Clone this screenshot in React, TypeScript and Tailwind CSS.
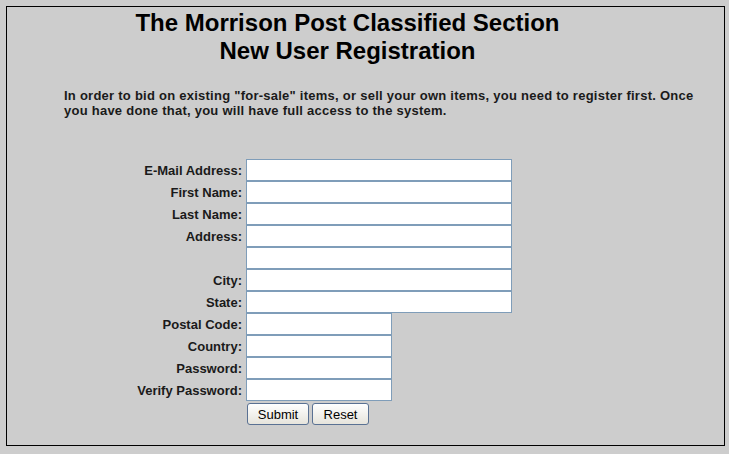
import React from "react";

const wide = "w-[266px]";
const short = "w-[146px]";

const rows: { label: string; w: string }[] = [
  { label: "E-Mail Address:", w: wide },
  { label: "First Name:", w: wide },
  { label: "Last Name:", w: wide },
  { label: "Address:", w: wide },
  { label: "", w: wide },
  { label: "City:", w: wide },
  { label: "State:", w: wide },
  { label: "Postal Code:", w: short },
  { label: "Country:", w: short },
  { label: "Password:", w: short },
  { label: "Verify Password:", w: short },
];

export default function App() {
  return (
    <div
      className="w-[729px] h-[454px] bg-[#cdcdcd] pt-[6px] pl-[6px] overflow-hidden text-black"
      style={{ fontFamily: '"Liberation Sans", Arial, sans-serif' }}
    >
      <div className="w-[719px] h-[440px] border border-black">
        <div className="w-[681px] text-center text-[24px] font-bold leading-[28px] pt-[2px]">
          <div>The Morrison Post Classified Section</div>
          <div>New User Registration</div>
        </div>
        <p className="mt-[23px] pl-[57px] pr-[20px] text-[13px] leading-[15px] font-bold tracking-[0.25px] text-[#1a1a1a]">
          In order to bid on existing "for-sale" items, or sell your own items, you need to register first. Once you have done that, you will have full access to the system.
        </p>
        <div className="mt-[41px] grid grid-cols-[235px_auto] gap-x-[4px] text-[13px] leading-[15px]">
          {rows.map((r, i) => (
            <React.Fragment key={i}>
              <div className="h-[22px] flex items-center justify-end font-bold text-[#1a1a1a]">{r.label}</div>
              <div className="h-[22px]">
                <input
                  type="text"
                  className={`${r.w} h-[22px] bg-white border border-[#7f9db9] outline-none block`}
                />
              </div>
            </React.Fragment>
          ))}
          <div />
          <div className="flex gap-[3px] pt-[2px] pl-[1px]">
            <button className="w-[62px] h-[22px] border border-[#5a7193] rounded-[3px] bg-gradient-to-b from-white to-[#e6e4dc] text-[13px] leading-[15px] text-black">
              Submit
            </button>
            <button className="w-[57px] h-[22px] border border-[#5a7193] rounded-[3px] bg-gradient-to-b from-white to-[#e6e4dc] text-[13px] leading-[15px] text-black">
              Reset
            </button>
          </div>
        </div>
      </div>
    </div>
  );
}
